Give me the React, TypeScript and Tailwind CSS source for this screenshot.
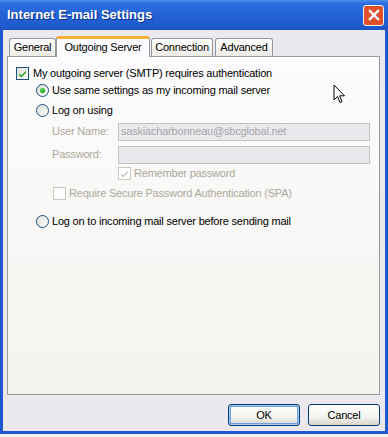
import React from "react"

const font = "font-[family-name:'Liberation_Sans',Arial,sans-serif]"

function CheckBox({ checked, disabled }: { checked?: boolean; disabled?: boolean }) {
  const border = disabled ? "#cac8bb" : "#1c5180"
  const tick = disabled ? "#cac8bb" : "#21a121"
  return (
    <svg width="13" height="13" viewBox="0 0 13 13" className="shrink-0">
      <defs>
        <linearGradient id={disabled ? "cbd" : "cbe"} x1="0" y1="0" x2="1" y2="1">
          <stop offset="0" stopColor={disabled ? "#ffffff" : "#dcdcd7"} />
          <stop offset="1" stopColor="#ffffff" />
        </linearGradient>
      </defs>
      <rect x="0.5" y="0.5" width="12" height="12" fill={`url(#${disabled ? "cbd" : "cbe"})`} stroke={border} />
      {checked && <path d="M3 6.2 L5.3 8.6 L10 3.8 L10 5.8 L5.3 10.6 L3 8.2 Z" fill={tick} />}
    </svg>
  )
}

function Radio({ checked }: { checked?: boolean }) {
  return (
    <svg width="13" height="13" viewBox="0 0 13 13" className="shrink-0">
      <defs>
        <linearGradient id="rb" x1="0" y1="0" x2="1" y2="1">
          <stop offset="0" stopColor="#dcdcd7" />
          <stop offset="1" stopColor="#ffffff" />
        </linearGradient>
        <radialGradient id="rd" cx="0.35" cy="0.35" r="0.7">
          <stop offset="0" stopColor="#5ede5a" />
          <stop offset="1" stopColor="#1e9b1e" />
        </radialGradient>
      </defs>
      <circle cx="6.5" cy="6.5" r="6" fill="url(#rb)" stroke="#1c5180" />
      {checked && <circle cx="6.5" cy="6.5" r="2.6" fill="url(#rd)" />}
    </svg>
  )
}

function CloseButton() {
  return (
    <div className="flex h-[21px] w-[21px] shrink-0 items-center justify-center rounded-[3px] border border-[#f4f4f4] bg-[#e0502a]">
      <svg width="12" height="12" viewBox="0 0 12 12">
        <path d="M2 2 L10 10 M10 2 L2 10" stroke="#ffffff" strokeWidth="2.4" strokeLinecap="square" />
      </svg>
    </div>
  )
}

function Tab({ label, active, width }: { label: string; active?: boolean; width: number }) {
  if (active) {
    return (
      <div
        style={{ width }}
        className="relative z-10 -mb-px flex h-[21px] items-center justify-center rounded-t-[3px] border-x border-t-[3px] border-x-[#919b9c] border-t-[#f5b03a] bg-[#fcfcfe] pb-[1px]"
      >
        {label}
      </div>
    )
  }
  return (
    <div
      style={{ width }}
      className="flex h-[18px] items-center justify-center rounded-t-[3px] border-x border-t border-[#919b9c] bg-[linear-gradient(to_bottom,#ffffff,#ecebe6)]"
    >
      {label}
    </div>
  )
}

function Button({ label, primary }: { label: string; primary?: boolean }) {
  return (
    <div
      className={
        "flex h-[22px] w-[72px] items-center justify-center rounded-[3px] border border-[#003c74] bg-[linear-gradient(to_bottom,#ffffff,#f3f3ef_60%,#d8d4ca)] " +
        (primary ? "shadow-[inset_0_0_0_1px_#a9c8f5,inset_0_0_0_2px_#6d9ce8]" : "")
      }
    >
      {label}
    </div>
  )
}

export default function App() {
  return (
    <div className={`relative h-[437px] w-[388px] overflow-hidden bg-[#f4f4f4] text-[11px] tracking-[-0.2px] text-black ${font}`}>
      <div className="flex h-[434px] flex-col bg-[#1f57cf] px-[3px] pb-[3px]">
        {/* title bar */}
        <div className="-mx-[3px] flex h-[30px] shrink-0 items-center justify-between bg-[linear-gradient(to_bottom,#4a8cec_0%,#2d6fe0_12%,#2462d5_50%,#1f5bcd_85%,#1a52c2_100%)] pl-[7px] pr-[4px]">
          <span className="text-[13px] font-bold tracking-normal text-white [text-shadow:1px_1px_0_#0f2f8a]">Internet E-mail Settings</span>
          <CloseButton />
        </div>

        {/* body */}
        <div className="flex flex-1 flex-col bg-[#ebe9ed] pb-[5px] pl-[4px] pr-[5px] pt-[6px]">
          <div className="ml-[2px] flex h-[20px] items-end">
            <Tab label="General" width={47} />
            <Tab label="Outgoing Server" width={94} active />
            <div className="w-[1px]" />
            <Tab label="Connection" width={62} />
            <div className="w-[2px]" />
            <Tab label="Advanced" width={58} />
          </div>

          <div className="flex h-[339px] flex-col border border-[#919b9c] bg-[linear-gradient(to_bottom,#fcfcfe,#f4f3ee)]">
            <div className="mt-[8px] flex h-[16px] items-center gap-[4px] pl-[8px]">
              <CheckBox checked />
              <span>My outgoing server (SMTP) requires authentication</span>
            </div>
            <div className="mt-[1px] flex h-[16px] items-center gap-[3px] pl-[28px]">
              <Radio checked />
              <span>Use same settings as my incoming mail server</span>
            </div>
            <div className="mt-[4px] flex h-[16px] items-center gap-[3px] pl-[28px]">
              <Radio />
              <span>Log on using</span>
            </div>
            <div className="mt-[4px] flex h-[19px] items-center pl-[44px] text-[#aca899]">
              <span className="w-[66px]">User Name:</span>
              <div className="flex h-[18px] w-[252px] items-center border border-[#c4c2bd] bg-[#e9e8ec] pl-[2px] text-[#a7a6aa]">
                saskiacharbonneau@sbcglobal.net
              </div>
            </div>
            <div className="mt-[4px] flex h-[19px] items-center pl-[44px] text-[#aca899]">
              <span className="w-[66px]">Password:</span>
              <div className="h-[18px] w-[252px] border border-[#c4c2bd] bg-[#e9e8ec]" />
            </div>
            <div className="mt-[1px] flex h-[16px] items-center gap-[3px] pl-[110px] text-[#aca899]">
              <CheckBox checked disabled />
              <span>Remember password</span>
            </div>
            <div className="mt-[4px] flex h-[16px] items-center gap-[3px] pl-[45px] text-[#aca899]">
              <CheckBox disabled />
              <span>Require Secure Password Authentication (SPA)</span>
            </div>
            <div className="mt-[12px] flex h-[16px] items-center gap-[3px] pl-[28px]">
              <Radio />
              <span>Log on to incoming mail server before sending mail</span>
            </div>
          </div>

          <div className="mt-[9px] flex justify-end gap-[8px]">
            <Button label="OK" primary />
            <Button label="Cancel" />
          </div>
        </div>
      </div>

      {/* mouse pointer */}
      <svg className="absolute left-[333px] top-[84px]" width="14" height="21" viewBox="0 0 14 21">
        <path d="M1 1 L1 16 L4.5 12.5 L7 18.5 L9 17.5 L6.6 11.8 L11.5 11.8 Z" fill="#fff" stroke="#000" strokeWidth="1" strokeLinejoin="miter" />
      </svg>
    </div>
  )
}
